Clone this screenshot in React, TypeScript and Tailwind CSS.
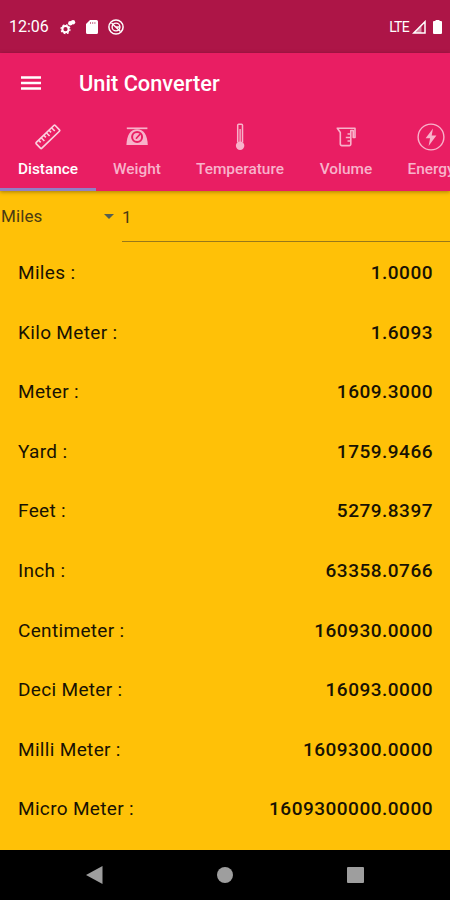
import { useState } from "react";
import type { ReactNode } from "react";

interface Unit {
  name: string;
  value: string;
}

interface Tab {
  id: string;
  label: string;
  width: string;
  icon: ReactNode;
}

const units: Unit[] = [
  { name: "Miles", value: "1.0000" },
  { name: "Kilo Meter", value: "1.6093" },
  { name: "Meter", value: "1609.3000" },
  { name: "Yard", value: "1759.9466" },
  { name: "Feet", value: "5279.8397" },
  { name: "Inch", value: "63358.0766" },
  { name: "Centimeter", value: "160930.0000" },
  { name: "Deci Meter", value: "16093.0000" },
  { name: "Milli Meter", value: "1609300.0000" },
  { name: "Micro Meter", value: "1609300000.0000" },
];

const RulerIcon = () => (
  <svg viewBox="0 0 28 28" className="w-7 h-7" fill="none" stroke="currentColor" strokeWidth="1.7" strokeLinejoin="round">
    <g transform="rotate(-44 14 14)">
      <rect x="0.8" y="9.8" width="26.4" height="8" rx="1" />
      <path d="M5 9.8v3M8.600 9.800v4.600M12.200 9.800v3M15.800 9.800v4.600M19.400 9.800v3M23 9.800v4.600" strokeWidth="1.6" />
    </g>
  </svg>
);

const ScaleIcon = () => (
  <svg viewBox="0 0 28 28" className="w-7 h-7" fill="none" stroke="currentColor">
    <path d="M3.800 5.300h20.600" strokeWidth="1.7" />
    <path d="M14.100 6.300c6.500 0 10.300 5.500 10.700 15.800H3.400C3.800 11.800 7.600 6.300 14.100 6.300z" fill="currentColor" stroke="none" />
    <circle cx="14.1" cy="14" r="5" stroke="#e91e63" strokeWidth="2" />
    <path d="M13.400 15.200l3.600-4" stroke="#e91e63" strokeWidth="1.7" strokeLinecap="round" />
  </svg>
);

const ThermometerIcon = () => (
  <svg viewBox="0 0 28 28" className="w-7 h-7" fill="none" stroke="currentColor">
    <path d="M11.7 19.5V2.2a1 1 0 0 1 1-1h2.8a1 1 0 0 1 1 1v17.3" strokeWidth="1.5" />
    <path d="M14.1 6v15" strokeWidth="1.4" />
    <circle cx="14.1" cy="22.7" r="4.2" fill="currentColor" stroke="none" />
  </svg>
);

const JugIcon = () => (
  <svg viewBox="0 0 28 28" className="w-7 h-7" fill="none" stroke="currentColor" strokeWidth="1.6" strokeLinejoin="round">
    <path d="M5.3 5.2H23v9.3h-1.8V7.5h-2.4v13.6a1.5 1.5 0 0 1-1.5 1.5H9.8a1.5 1.5 0 0 1-1.5-1.5V9.5z" />
    <path d="M18.8 11h-3.3M18.8 14.5h-5M18.8 18h-3.3" />
  </svg>
);

const EnergyIcon = () => (
  <svg viewBox="0 0 28 28" className="w-7 h-7">
    <circle cx="14" cy="14" r="12.9" fill="none" stroke="currentColor" strokeWidth="1.4" />
    <path d="M16 5.500L8.600 15.300h4.500l-1.500 7.700L19.400 12.500h-4.700z" fill="currentColor" />
  </svg>
);

const tabs: Tab[] = [
  { id: "distance", label: "Distance", width: "w-24", icon: <RulerIcon /> },
  { id: "weight", label: "Weight", width: "w-[82px]", icon: <ScaleIcon /> },
  { id: "temperature", label: "Temperature", width: "w-[124px]", icon: <ThermometerIcon /> },
  { id: "volume", label: "Volume", width: "w-[88px]", icon: <JugIcon /> },
  { id: "energy", label: "Energy", width: "w-[82px]", icon: <EnergyIcon /> },
];

const StatusBar = () => (
  <div className="h-[53px] shrink-0 bg-[#ad1547] flex items-center justify-between pl-[9px] pr-2 text-white">
    <div className="flex items-center">
      <span className="w-[50px] pt-px text-base">12:06</span>
      <svg viewBox="0 0 16 16" className="w-4 h-4 relative left-px" fill="none" stroke="currentColor">
        <circle cx="5.5" cy="10.2" r="3.1" strokeWidth="2" />
        <circle cx="5.5" cy="10.2" r="4.5" strokeWidth="1.2" strokeDasharray="1.8 1.73" />
        <circle cx="10.3" cy="4.2" r="2.2" fill="currentColor" stroke="none" />
        <circle cx="13" cy="3.3" r="2.2" fill="currentColor" stroke="none" />
      </svg>
      <svg viewBox="0 0 12 14" className="w-3 h-3.5 ml-[11px]">
        <path d="M4 0h6.5A1.5 1.5 0 0 1 12 1.5v11a1.5 1.5 0 0 1-1.5 1.5h-9A1.5 1.5 0 0 1 0 12.5V4z" fill="currentColor" />
        <path d="M4.5 2v2M6.7 2v2M8.9 2v2" stroke="#ad1547" strokeWidth="0.6" />
      </svg>
      <svg viewBox="0 0 16 16" className="w-4 h-4 ml-2.5" fill="none" stroke="currentColor">
        <circle cx="8" cy="8" r="7.1" strokeWidth="1.5" />
        <circle cx="8" cy="8" r="3.9" strokeWidth="1.4" />
        <path d="M3.5 4l9 8.5M7.5 8h4" strokeWidth="1.4" />
      </svg>
    </div>
    <div className="flex items-center">
      <span className="text-sm tracking-[-0.7px]">LTE</span>
      <svg viewBox="0 0 14 14" className="w-3.5 h-3.5 ml-[3px]">
        <path d="M1.7 13L13 1.7V13z" fill="none" stroke="currentColor" strokeWidth="1.5" />
        <path d="M9.5 5v8H1.7z" fill="currentColor" fillOpacity="0.5" />
      </svg>
      <svg viewBox="0 0 9 14" className="w-[9px] h-3.5 ml-[7px]">
        <path d="M2.5 0h4v1H8a1 1 0 0 1 1 1v11a1 1 0 0 1-1 1H1a1 1 0 0 1-1-1V2a1 1 0 0 1 1-1h1.5z" fill="currentColor" />
      </svg>
    </div>
  </div>
);

const NavigationBar = () => (
  <div className="h-[50px] shrink-0 bg-black flex items-center justify-between pl-[86px] pr-[86px]">
    <svg viewBox="0 0 17 18" className="w-[17px] h-[18px] text-[#9e9e9e]">
      <path d="M16.5 0v18L0 9z" fill="currentColor" />
    </svg>
    <div className="w-4 h-4 rounded-full bg-[#9e9e9e]" />
    <div className="w-[17px] h-4 rounded-[1px] bg-[#9e9e9e]" />
  </div>
);

export default function App() {
  const [activeTab, setActiveTab] = useState("distance");
  const [amount, setAmount] = useState("1");

  return (
    <div className="w-[450px] h-[900px] flex flex-col overflow-hidden bg-[#ffc107] font-[Roboto,sans-serif]">
      <StatusBar />

      <header className="h-[138px] shrink-0 bg-[#e91e63] text-white shadow-[0_1px_4px_rgba(0,0,0,0.35)]">
        <div className="h-[60px] flex items-center pl-[21px]">
          <button aria-label="Menu" className="w-5">
            <svg viewBox="0 0 20 14" className="w-5 h-3.5" stroke="currentColor" strokeWidth="2.3">
              <path d="M0 1.5h20M0 7h20M0 12.5h20" />
            </svg>
          </button>
          <h1 className="ml-[38px] pt-0.5 text-[21.8px] font-medium">Unit Converter</h1>
        </div>
        <nav className="h-[78px] flex overflow-hidden">
          {tabs.map((tab) => (
            <button
              key={tab.id}
              onClick={() => setActiveTab(tab.id)}
              className={`${tab.width} h-full shrink-0 flex flex-col items-center pt-2.5 border-b-3 text-[15.4px] font-medium ${activeTab === tab.id ? "border-[#9180c4] text-white" : "border-transparent text-[#f8b2ca]"}`}
            >
              <span className={activeTab === tab.id ? "text-[#fbd0de]" : ""}>{tab.icon}</span>
              <span className="mt-[7px] leading-[22px]">{tab.label}</span>
            </button>
          ))}
        </nav>
      </header>

      <main className="flex-1">
        <div className="h-[52px] flex items-start text-[#4a3b13]">
          <button className="w-[122px] h-[47px] mt-0.5 pl-px pr-2 flex items-center justify-between text-[17px] tracking-[0.1px]">
            <span>Miles</span>
            <svg viewBox="0 0 10 5" className="w-2.5 h-[5px]">
              <path d="M0 0h10L5 5z" fill="#566052" />
            </svg>
          </button>
          <input
            aria-label="Amount"
            value={amount}
            onChange={(e) => setAmount(e.target.value)}
            className="flex-1 min-w-0 h-[51px] pt-px border-b border-[#98781a] outline-none text-[17px]"
          />
        </div>
        <ul>
          {units.map((unit) => (
            <li key={unit.name} className="h-[59.6px] pt-px flex items-center justify-between pl-[18px] pr-[17px] text-[19px] text-[#181203]">
              <span className="tracking-[0.33px]">{unit.name} :</span>
              <span className="font-medium tracking-[0.5px]">{unit.value}</span>
            </li>
          ))}
        </ul>
      </main>

      <NavigationBar />
    </div>
  );
}
